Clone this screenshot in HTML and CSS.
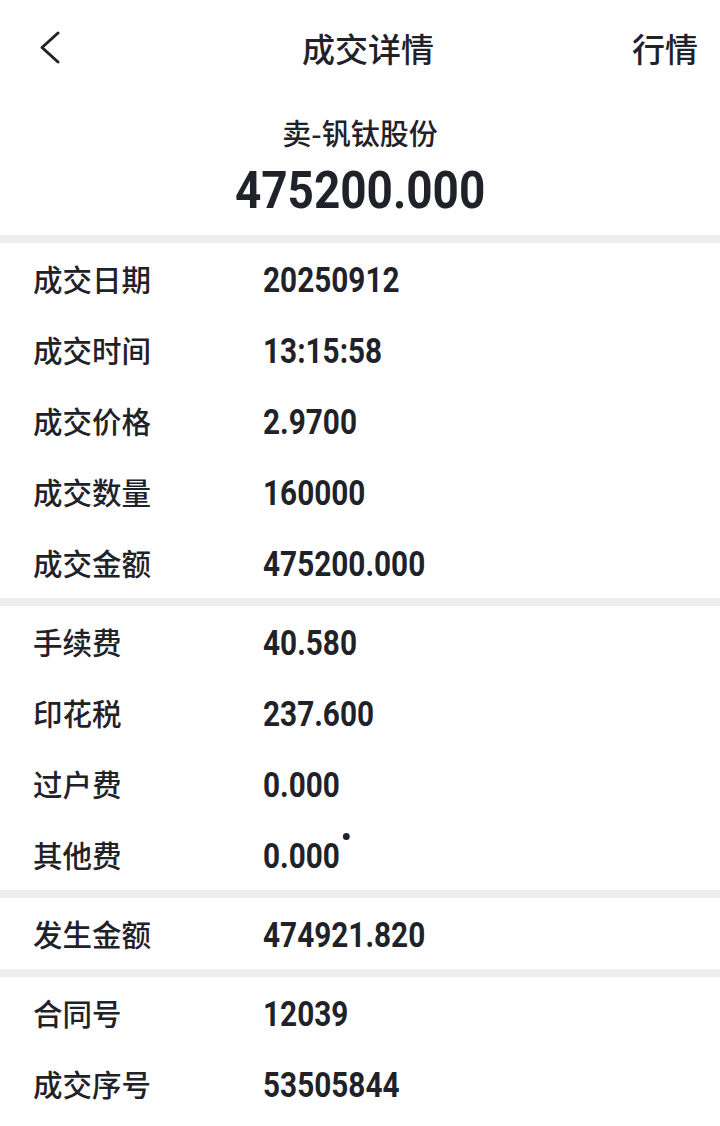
FILE: index.html
```html
<!DOCTYPE html>
<html>
<head>
  <meta charset="utf-8">
  <title>成交详情</title>
  <link rel="stylesheet" href="styles.css">
</head>
<body>
  <div class="page">
    <div class="nav">
      <span class="nav-back">
        <svg width="30" height="40" viewBox="0 0 30 40"><polyline points="20,5 4,19.5 20,34" fill="none" stroke="#1f2229" stroke-width="3" stroke-linecap="round" stroke-linejoin="round"/></svg>
      </span>
      <div class="nav-title">成交详情</div>
      <span class="nav-link">行情</span>
    </div>

    <div class="summary">
      <div class="summary-name">卖-钒钛股份</div>
      <div class="summary-amount"><span class="num">475200.000</span></div>
    </div>

    <div class="group">
      <div class="row"><span class="label">成交日期</span><span class="value">20250912</span></div>
      <div class="row"><span class="label">成交时间</span><span class="value">13:15:58</span></div>
      <div class="row"><span class="label">成交价格</span><span class="value">2.9700</span></div>
      <div class="row"><span class="label">成交数量</span><span class="value">160000</span></div>
      <div class="row"><span class="label">成交金额</span><span class="value">475200.000</span></div>
    </div>

    <div class="group">
      <div class="row"><span class="label">手续费</span><span class="value">40.580</span></div>
      <div class="row"><span class="label">印花税</span><span class="value">237.600</span></div>
      <div class="row"><span class="label">过户费</span><span class="value">0.000</span></div>
      <div class="row"><span class="label">其他费</span><span class="value">0.000<i class="dot"></i></span></div>
    </div>

    <div class="group">
      <div class="row"><span class="label">发生金额</span><span class="value">474921.820</span></div>
    </div>

    <div class="group">
      <div class="row"><span class="label">合同号</span><span class="value">12039</span></div>
      <div class="row"><span class="label">成交序号</span><span class="value">53505844</span></div>
    </div>
  </div>
</body>
</html>
```

FILE: styles.css
```css
/* trade detail page */
body {
  margin: 0;
  background: #fff;
  font-family: "Noto Sans CJK SC", "Noto Sans", sans-serif;
  color: #1f2229;
}
.page {
  width: 720px;
}
.nav {
  height: 96px;
  display: flex;
  align-items: center;
  justify-content: space-between;
  padding: 0 22px 0 38px;
  box-sizing: border-box;
}
.nav-back {
  width: 80px;
  display: flex;
  align-items: center;
}
.nav-title {
  font-size: 33px;
  font-weight: 500;
}
.nav-link {
  width: 80px;
  text-align: right;
  font-size: 33px;
  font-weight: 500;
}
.summary {
  padding: 13px 0 12px;
  text-align: center;
}
.summary-name {
  font-size: 29px;
  font-weight: 500;
  line-height: 46px;
}
.summary-amount {
  margin-top: 4px;
  font-family: Roboto, sans-serif;
  font-weight: 700;
  font-size: 51px;
  line-height: 64px;
}
.summary-amount .num {
  display: inline-block;
  transform: scaleX(0.9);
}
.group {
  border-top: 8px solid #eeeeee;
}
.row {
  height: 71px;
  display: flex;
  align-items: center;
  padding-left: 33px;
}
.label {
  width: 230px;
  font-size: 29.5px;
  font-weight: 500;
  padding-bottom: 2px;
}
.value {
  position: relative;
  display: inline-block;
  font-family: Roboto, sans-serif;
  font-weight: 700;
  font-size: 35px;
  line-height: 40px;
  padding-top: 5px;
  transform: scaleX(0.85);
  transform-origin: left center;
}
.dot {
  position: absolute;
  right: -12px;
  top: 1px;
  width: 8px;
  height: 7px;
  border-radius: 50%;
  background: #1f2229;
}
```
